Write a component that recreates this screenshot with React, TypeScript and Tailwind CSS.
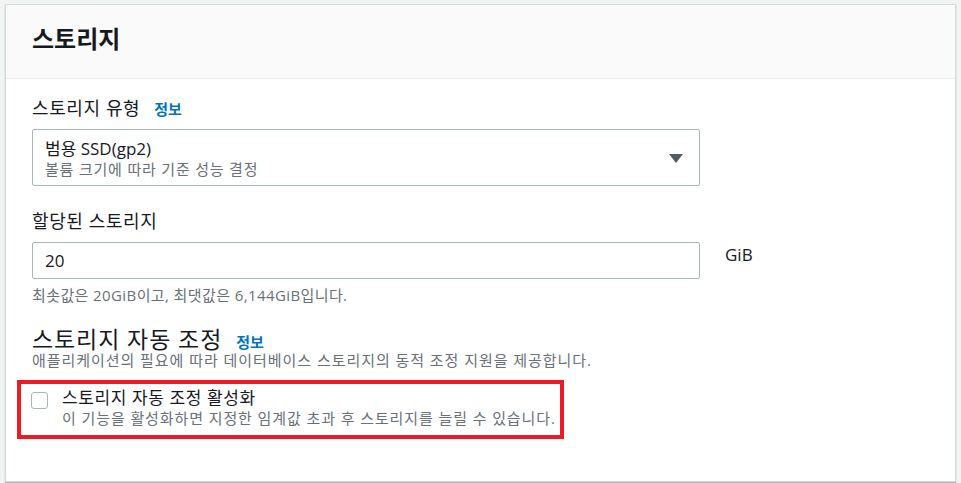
import React from "react";

const font = { fontFamily: '"Open Sans", "Noto Sans CJK KR", sans-serif' };

export default function App() {
  return (
    <div className="min-h-[483px] w-[961px] bg-[#f2f3f3] pt-[4px] pl-[5px] pr-[5px]" style={font}>
      <div className="h-[478px] w-[951px] border border-[#d5dbdb] bg-white shadow-[0_1px_1px_0_rgba(0,28,36,0.3)]">
        <div className="h-[74px] border-b border-[#eaeded] bg-[#fafafa] pl-[26px] pt-[16px]">
          <h2 className="text-[24px] font-bold leading-[36px] text-[#16191f]">스토리지</h2>
        </div>
        <div className="pl-[26px] pt-[17px]">
          <div className="flex items-baseline gap-[14px] text-[18px] leading-[24px] text-[#16191f]">
            <span className="tracking-[0.6px]">스토리지 유형</span>
            <span className="text-[15px] font-bold text-[#0073bb]">정보</span>
          </div>
          <div className="mt-[8px] flex h-[57px] w-[668px] items-center justify-between rounded-[2px] border border-[#aab7b8] pl-[12px] pr-[16px]">
            <div className="flex flex-col">
              <span className="text-[17px] leading-[23px] text-[#16191f]">범용 SSD(gp2)</span>
              <span className="text-[15px] leading-[18px] tracking-[0.8px] text-[#687078]">볼륨 크기에 따라 기준 성능 결정</span>
            </div>
            <svg width="14" height="9" viewBox="0 0 14 9" className="mt-[1px]">
              <path d="M0 0 L14 0 L7 9 Z" fill="#545b64" />
            </svg>
          </div>

          <div className="mt-[23px] text-[18px] leading-[24px] tracking-[0.6px] text-[#16191f]">할당된 스토리지</div>
          <div className="mt-[9px] flex items-start">
            <div className="flex h-[37px] w-[668px] items-center rounded-[2px] border border-[#aab7b8] pl-[12px] text-[17px] text-[#16191f]">
              20
            </div>
            <span className="ml-[25px] mt-[1px] text-[17px] leading-[24px] text-[#16191f]">GiB</span>
          </div>
          <div className="mt-[7px] text-[15px] leading-[18px] tracking-[0.4px] text-[#687078]">
            최솟값은 20GiB이고, 최댓값은 6,144GiB입니다.
          </div>

          <div className="mt-[24px] flex h-[23px] items-baseline gap-[14px] leading-[23px]">
            <span className="text-[23px] leading-[23px] tracking-[0.9px] text-[#16191f]">스토리지 자동 조정</span>
            <span className="text-[15px] leading-[18px] font-bold text-[#0073bb]">정보</span>
          </div>
          <div className="text-[15px] leading-[18px] tracking-[0.95px] text-[#687078]">
            애플리케이션의 필요에 따라 데이터베이스 스토리지의 동적 조정 지원을 제공합니다.
          </div>
        </div>
        <div className="ml-[11px] mt-[11px] w-[547px] border-[4px] border-[#ed1c24] pb-[7px] pl-[10px] pt-[2px]">
          <div className="flex items-start gap-[14px]">
            <div className="mt-[6px] h-[17px] w-[17px] rounded-[3px] border border-[#aab7b8] bg-white" />
            <div className="flex flex-col">
              <span className="text-[17px] leading-[23px] tracking-[0.6px] text-[#16191f]">스토리지 자동 조정 활성화</span>
              <span className="text-[15px] leading-[19px] tracking-[0.9px] text-[#687078]">
                이 기능을 활성화하면 지정한 임계값 초과 후 스토리지를 늘릴 수 있습니다.
              </span>
            </div>
          </div>
        </div>
      </div>
    </div>
  );
}
